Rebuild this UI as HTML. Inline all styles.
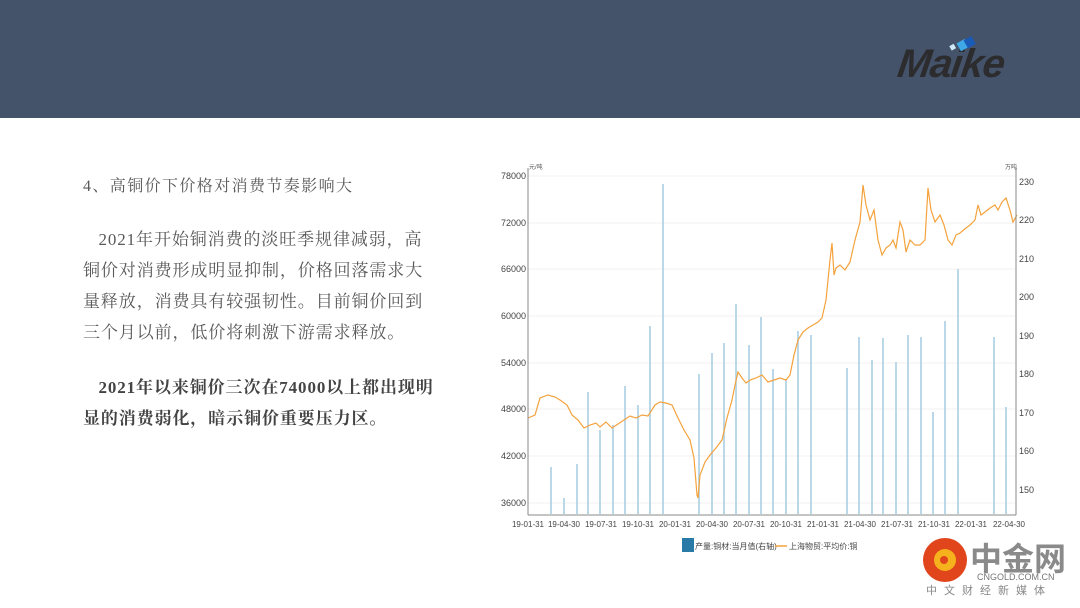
<!DOCTYPE html>
<html><head><meta charset="utf-8"><style>
body{margin:0;width:1080px;height:608px;background:#fff;position:relative;overflow:hidden;font-family:"Liberation Sans","Noto Sans CJK SC",sans-serif}
.hdr{position:absolute;left:0;top:0;width:1080px;height:118px;background:#44536a}
.logo{position:absolute;left:898px;top:42px;font:italic 900 40px "Liberation Sans",sans-serif;color:#2c2c2e;letter-spacing:-1px;transform:skewX(-8deg)}
.t{position:absolute;left:83px;color:#595959;font-size:17px;letter-spacing:0.9px;line-height:31px;font-family:"Liberation Serif","Noto Serif CJK SC",serif;white-space:nowrap}
.b{font-weight:bold;color:#444}
</style></head><body>
<div class="hdr"></div>
<div class="logo">Maike</div>
<svg style="position:absolute;left:945px;top:36px" width="40" height="22"><rect x="5" y="9" width="5" height="5" fill="#cfe8f7" transform="rotate(-30 7 11)"/><rect x="13" y="5" width="9" height="9" fill="#3fa9e8" transform="rotate(-30 17 9)"/><rect x="20" y="2" width="9" height="9" fill="#1b5bb8" transform="rotate(-30 24 6)"/></svg>
<div class="t" style="top:171px;font-size:16px;letter-spacing:1.4px">4、高铜价下价格对消费节奏影响大</div>
<div class="t" style="top:224px">&nbsp;&nbsp;&nbsp;2021年开始铜消费的淡旺季规律减弱，高<br>铜价对消费形成明显抑制，价格回落需求大<br>量释放，消费具有较强韧性。目前铜价回到<br>三个月以前，低价将刺激下游需求释放。</div>
<div class="t b" style="top:372px">&nbsp;&nbsp;&nbsp;2021年以来铜价三次在74000以上都出现明<br>显的消费弱化，暗示铜价重要压力区。</div>
<svg style="position:absolute;left:0;top:0" width="1080" height="608" font-family="Liberation Sans,Noto Sans CJK SC,sans-serif">
<g stroke="#f2f2f2" stroke-width="1">
<line x1="528" y1="176" x2="1015" y2="176"/><line x1="528" y1="223" x2="1015" y2="223"/><line x1="528" y1="269" x2="1015" y2="269"/><line x1="528" y1="316" x2="1015" y2="316"/><line x1="528" y1="363" x2="1015" y2="363"/><line x1="528" y1="409" x2="1015" y2="409"/><line x1="528" y1="456" x2="1015" y2="456"/><line x1="528" y1="503" x2="1015" y2="503"/></g>
<g stroke="#a9cfe3" stroke-width="1.6">
<line x1="551" y1="514" x2="551" y2="467"/><line x1="564" y1="514" x2="564" y2="498"/><line x1="577" y1="514" x2="577" y2="464"/><line x1="588" y1="514" x2="588" y2="392"/><line x1="600" y1="514" x2="600" y2="430"/><line x1="613" y1="514" x2="613" y2="425"/><line x1="625" y1="514" x2="625" y2="386"/><line x1="638" y1="514" x2="638" y2="405"/><line x1="650" y1="514" x2="650" y2="326"/><line x1="663" y1="514" x2="663" y2="184"/><line x1="699" y1="514" x2="699" y2="374"/><line x1="712" y1="514" x2="712" y2="353"/><line x1="724" y1="514" x2="724" y2="343"/><line x1="736" y1="514" x2="736" y2="304"/><line x1="749" y1="514" x2="749" y2="345"/><line x1="761" y1="514" x2="761" y2="317"/><line x1="773" y1="514" x2="773" y2="369"/><line x1="786" y1="514" x2="786" y2="380"/><line x1="798" y1="514" x2="798" y2="331"/><line x1="811" y1="514" x2="811" y2="335"/><line x1="847" y1="514" x2="847" y2="368"/><line x1="859" y1="514" x2="859" y2="337"/><line x1="872" y1="514" x2="872" y2="360"/><line x1="883" y1="514" x2="883" y2="338"/><line x1="896" y1="514" x2="896" y2="362"/><line x1="908" y1="514" x2="908" y2="335"/><line x1="921" y1="514" x2="921" y2="337"/><line x1="933" y1="514" x2="933" y2="412"/><line x1="945" y1="514" x2="945" y2="321"/><line x1="958" y1="514" x2="958" y2="269"/><line x1="994" y1="514" x2="994" y2="337"/><line x1="1006" y1="514" x2="1006" y2="407"/></g>
<polyline fill="none" stroke="#f4a23c" stroke-width="1.2" points="528,418 535,415 540,398 548,395 555,397 560,400 567,405 572,415 578,420 584,428 590,425 596,423 600,427 606,422 612,428 618,424 624,420 630,416 636,418 642,415 648,416 655,405 660,402 666,403 672,405 678,418 684,430 690,440 694,458 697,495 698,498 700,475 705,462 710,455 716,448 722,440 727,418 732,400 735,385 738,372 742,378 746,383 750,380 756,378 762,375 768,382 774,380 780,378 786,380 790,375 794,355 798,340 803,332 808,328 813,325 818,322 822,318 826,300 830,260 832,243 834,275 836,268 840,265 845,270 850,262 855,240 860,222 863,185 866,205 870,220 874,210 878,240 882,255 886,248 890,245 893,240 896,248 900,222 903,230 906,252 910,240 915,245 920,245 925,240 928,188 931,210 935,222 940,215 944,225 948,240 952,245 956,235 960,233 966,228 970,225 975,220 978,205 981,215 985,212 990,208 995,205 998,210 1002,202 1006,198 1010,210 1013,222 1017,215"/>
<g stroke="#888" stroke-width="1"><line x1="528" y1="168" x2="528" y2="515"/><line x1="1016" y1="168" x2="1016" y2="515"/><line x1="528" y1="515" x2="1016" y2="515"/></g>
<g font-size="9" fill="#444" text-anchor="end">
<text x="526" y="179">78000</text><text x="526" y="226">72000</text><text x="526" y="272">66000</text><text x="526" y="319">60000</text><text x="526" y="366">54000</text><text x="526" y="412">48000</text><text x="526" y="459">42000</text><text x="526" y="506">36000</text></g>
<g font-size="9" fill="#444"><text x="1019" y="185">230</text><text x="1019" y="223">220</text><text x="1019" y="262">210</text><text x="1019" y="300">200</text><text x="1019" y="339">190</text><text x="1019" y="377">180</text><text x="1019" y="416">170</text><text x="1019" y="454">160</text><text x="1019" y="493">150</text></g>
<text x="529" y="169" font-size="6" fill="#555">元/吨</text><text x="1005" y="169" font-size="6" fill="#555">万吨</text>
<g font-size="8" fill="#444" text-anchor="middle">
<text x="528" y="527">19-01-31</text><text x="564" y="527">19-04-30</text><text x="601" y="527">19-07-31</text><text x="638" y="527">19-10-31</text><text x="675" y="527">20-01-31</text><text x="712" y="527">20-04-30</text><text x="749" y="527">20-07-31</text><text x="786" y="527">20-10-31</text><text x="823" y="527">21-01-31</text><text x="860" y="527">21-04-30</text><text x="897" y="527">21-07-31</text><text x="934" y="527">21-10-31</text><text x="971" y="527">22-01-31</text><text x="1009" y="527">22-04-30</text></g>
<rect x="682" y="538" width="12" height="14" fill="#2a7aa8"/><text x="695" y="549" font-size="8" fill="#444">产量:铜材:当月值(右轴)</text>
<line x1="775" y1="546" x2="787" y2="546" stroke="#f4a23c" stroke-width="1.5"/><text x="789" y="549" font-size="8" fill="#444">上海物贸:平均价:铜</text>
<circle cx="945" cy="560" r="22" fill="#e0451c"/><circle cx="945" cy="560" r="11" fill="#f6b21c"/><circle cx="944" cy="560" r="4" fill="#e0451c"/>
<text x="970" y="570" font-size="32" font-weight="bold" fill="#8a8a8a" font-family="Noto Sans CJK SC,sans-serif">中金网</text>
<text x="977" y="580" font-size="9" fill="#777">CNGOLD.COM.CN</text>
<text x="926" y="594" font-size="11" fill="#888" letter-spacing="7">中文财经新媒体</text>
</svg>
</body></html>
